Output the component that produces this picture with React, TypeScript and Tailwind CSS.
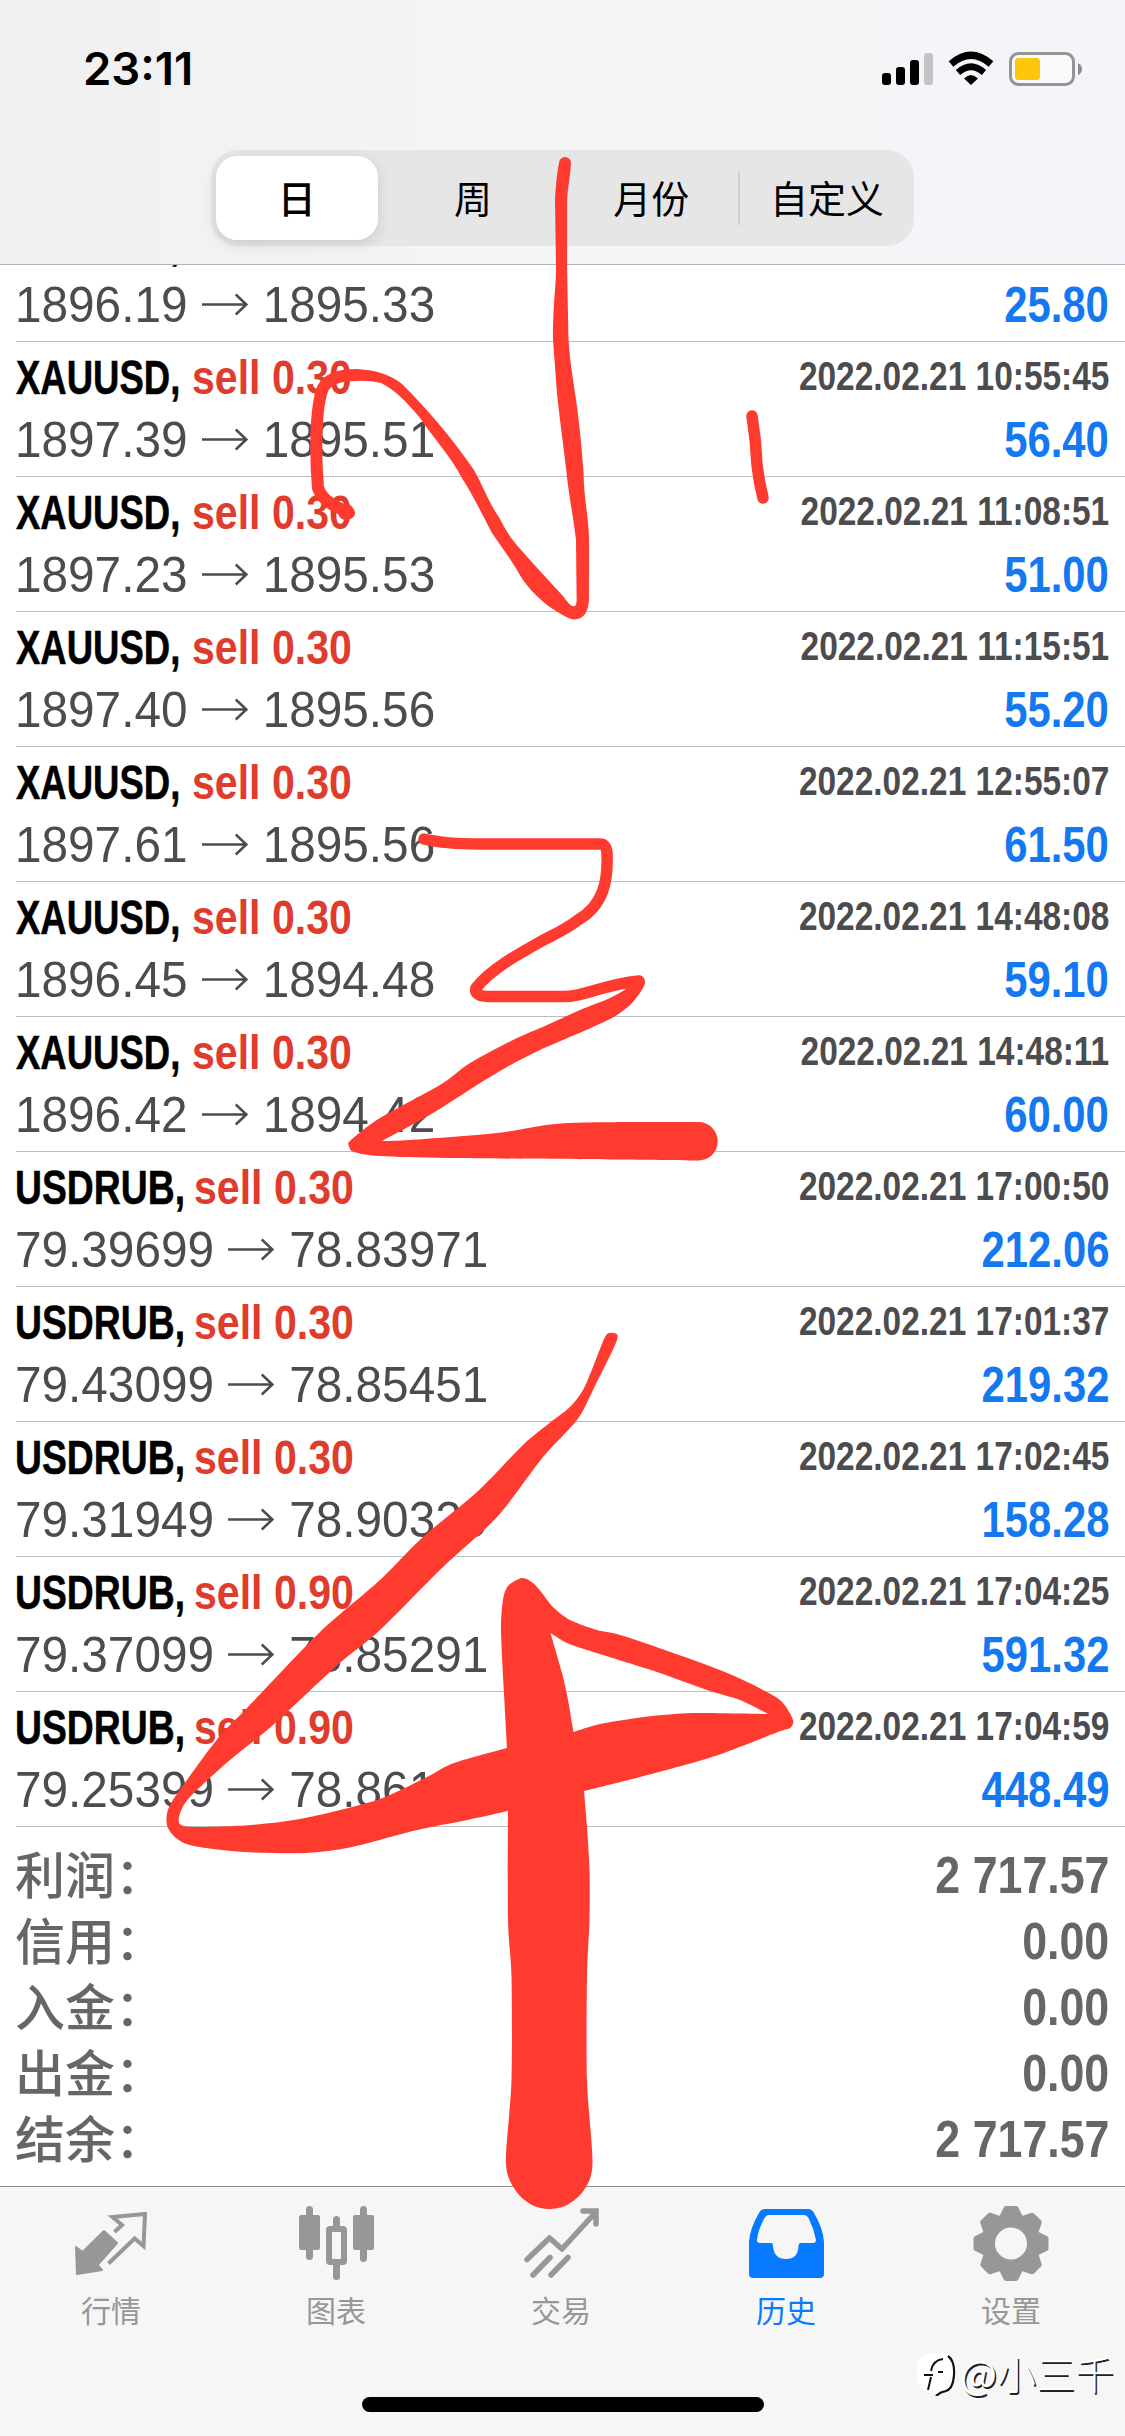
import React from 'react';

type Point = [number, number];

interface Deal {
  symbol: string;
  volume: string;
  open: string;
  close: string;
  time: string;
  profit: string;
}

const deals: Deal[] = [
  { symbol: 'XAUUSD', volume: '0.30', open: '1896.19', close: '1895.33', time: '2022.02.21 10:42:18', profit: '25.80' },
  { symbol: 'XAUUSD', volume: '0.30', open: '1897.39', close: '1895.51', time: '2022.02.21 10:55:45', profit: '56.40' },
  { symbol: 'XAUUSD', volume: '0.30', open: '1897.23', close: '1895.53', time: '2022.02.21 11:08:51', profit: '51.00' },
  { symbol: 'XAUUSD', volume: '0.30', open: '1897.40', close: '1895.56', time: '2022.02.21 11:15:51', profit: '55.20' },
  { symbol: 'XAUUSD', volume: '0.30', open: '1897.61', close: '1895.56', time: '2022.02.21 12:55:07', profit: '61.50' },
  { symbol: 'XAUUSD', volume: '0.30', open: '1896.45', close: '1894.48', time: '2022.02.21 14:48:08', profit: '59.10' },
  { symbol: 'XAUUSD', volume: '0.30', open: '1896.42', close: '1894.42', time: '2022.02.21 14:48:11', profit: '60.00' },
  { symbol: 'USDRUB', volume: '0.30', open: '79.39699', close: '78.83971', time: '2022.02.21 17:00:50', profit: '212.06' },
  { symbol: 'USDRUB', volume: '0.30', open: '79.43099', close: '78.85451', time: '2022.02.21 17:01:37', profit: '219.32' },
  { symbol: 'USDRUB', volume: '0.30', open: '79.31949', close: '78.90329', time: '2022.02.21 17:02:45', profit: '158.28' },
  { symbol: 'USDRUB', volume: '0.90', open: '79.37099', close: '78.85291', time: '2022.02.21 17:04:25', profit: '591.32' },
  { symbol: 'USDRUB', volume: '0.90', open: '79.25399', close: '78.86169', time: '2022.02.21 17:04:59', profit: '448.49' },
];

const totals = [
  { label: '利润：', value: '2 717.57' },
  { label: '信用：', value: '0.00' },
  { label: '入金：', value: '0.00' },
  { label: '出金：', value: '0.00' },
  { label: '结余：', value: '2 717.57' },
];

/**
 * Closed outline through the points, rounded a little at every point.
 * A point that is given twice stays a sharp corner.
 */
const outline = (pts: Point[]): string => {
  const n = pts.length;
  const k = 7;
  const same = (p: Point, q: Point) => p[0] === q[0] && p[1] === q[1];
  let d = `M${pts[0][0]} ${pts[0][1]}`;
  for (let i = 0; i < n; i++) {
    const a = pts[(i - 1 + n) % n];
    const b = pts[i];
    const c = pts[(i + 1) % n];
    const e = pts[(i + 2) % n];
    if (same(b, c)) continue;
    const c1 = same(a, b) ? b : [b[0] + (c[0] - a[0]) / k, b[1] + (c[1] - a[1]) / k];
    const c2 = same(c, e) ? c : [c[0] - (e[0] - b[0]) / k, c[1] - (e[1] - b[1]) / k];
    d += `C${c1[0]} ${c1[1]} ${c2[0]} ${c2[1]} ${c[0]} ${c[1]}`;
  }
  return d + 'Z';
};

const fourOuter: Point[] = [
  [605, 1337], [593, 1367], [583, 1390], [570, 1407], [547, 1425], [523, 1445], [477, 1492], [423, 1537],
  [380, 1580], [320, 1632], [248, 1707], [219, 1737], [187, 1780], [169, 1807], [167, 1825], [176, 1838],
  [194, 1846], [244, 1852], [305, 1853], [352, 1847], [413, 1831], [467, 1820], [508, 1811], [508, 1811],
  [508, 1920], [511.5, 1977], [511.5, 2080], [506, 2163], [516, 2191], [532, 2205], [549, 2209], [567, 2205],
  [584, 2190], [592.5, 2163], [587, 2080], [587, 1977], [589.5, 1920], [589.5, 1870], [587, 1827], [584, 1791],
  [584, 1791], [640, 1777], [712, 1757], [778, 1732], [790, 1728], [793, 1720], [783, 1703], [767, 1692],
  [720, 1670], [627, 1637], [597, 1630], [570, 1620], [553, 1607], [542, 1593], [533, 1583], [522, 1578],
  [508, 1586], [503, 1600], [501, 1630], [504, 1693], [507, 1748], [507, 1748], [454, 1763], [427, 1777],
  [377, 1800], [305, 1818], [251, 1825], [201, 1827], [181, 1825], [179.5, 1815], [190, 1797], [230, 1760],
  [273, 1725], [337.5, 1665], [380, 1630], [443, 1567], [497, 1517], [543, 1457], [577, 1420], [593, 1390],
  [617, 1340], [612, 1333],
];

const fourInner: Point[] = [
  [550.5, 1633], [550.5, 1633], [562, 1673], [568, 1700], [573.5, 1732], [573.5, 1732], [600, 1724], [637, 1718],
  [663, 1715], [697, 1713], [768, 1714], [768, 1714], [740, 1700], [707, 1690], [657, 1672], [587, 1650],
  [567, 1643],
];

const threeTail: Point[] = [
  [627, 988], [610, 998], [580, 1010], [547, 1025], [513, 1040], [470, 1063], [440, 1085], [380, 1118],
  [351, 1140], [349, 1146], [354, 1152], [380, 1156], [450, 1158], [610, 1159.5], [698, 1160.5], [698, 1160.5],
  [698, 1122], [698, 1122], [567, 1123], [497, 1133], [410, 1140], [382, 1141], [382, 1141], [433, 1113],
  [477, 1085], [507, 1067], [540, 1050], [593, 1027], [617, 1015], [633, 1002], [645, 983], [636, 976],
];

/**
 * Status bar
 */
const StatusBar: React.FC = () => (
  <div className="flex h-[138px] items-center justify-between pl-[83px] pr-[42px]">
    <span className="font-['Inter'] text-[45.5px] leading-none font-semibold text-black">23:11</span>
    <svg className="h-9 w-[202px]" viewBox="881 51 202 36">
      <rect x="882" y="73" width="9" height="12" rx="3" />
      <rect x="896" y="67" width="9" height="18" rx="3" />
      <rect x="910" y="60" width="9" height="25" rx="3" />
      <rect x="924" y="53" width="9" height="32" rx="3" fill="#c4c4c4" />
      <path d="M951 64Q971 46.500 991 64" fill="none" stroke="#000" strokeWidth="7" />
      <path d="M958 72.500Q971 61 984 72.500" fill="none" stroke="#000" strokeWidth="6.5" />
      <path d="M964 78.5Q971 71.500 978 78.500L971 85Z" />
      <rect x="1010.500" y="53.500" width="63" height="31" rx="8" fill="#f8f9fb" stroke="#949494" strokeWidth="3" />
      <rect x="1015" y="58" width="25" height="22" rx="3.500" fill="#fdc70b" />
      <path d="M1078 63Q1082 65 1082 69Q1082 73 1078 75Z" fill="#8c8c8c" />
    </svg>
  </div>
);

/**
 * Period selector
 */
const PeriodTabs: React.FC = () => (
  <div className="mx-auto mt-3 grid h-24 w-[703px] grid-cols-4 rounded-[27px] bg-[#e6e6e7] font-['Noto_Sans_CJK_SC',sans-serif] text-[38px] leading-none text-black">
    <div className="my-1.5 ml-[5px] mr-[9px] flex items-center justify-center rounded-[21px] bg-white pb-[3px] font-medium shadow-[0_4px_14px_rgba(0,0,0,0.12)]">
      日
    </div>
    <div className="flex items-center justify-center pb-[3px] pr-[3px]">周</div>
    <div className="flex items-center justify-center pb-[3px] pl-0.5">月份</div>
    <div className="flex items-center">
      <div className="h-[54px] w-0.5 bg-[#cfcfd1]" />
      <div className="flex-1 pb-[3px] text-center">自定义</div>
    </div>
  </div>
);

const DealRow: React.FC<{ deal: Deal }> = ({ deal }) => (
  <div className="ml-4 h-[135px] border-b border-[#bdbdbf] pr-4 pt-2.5 whitespace-nowrap">
    <div className="flex h-[50px] items-start justify-between">
      <div className="flex text-[49px] leading-[50px] font-bold">
        <div className="w-[176px]">
          <span
            className={
              deal.symbol === 'XAUUSD'
                ? 'inline-block origin-left scale-x-[0.745] text-black [-webkit-text-stroke:0.5px_#000]'
                : 'inline-block origin-left -translate-x-px scale-x-[0.762] text-black [-webkit-text-stroke:0.5px_#000]'
            }
          >
            {deal.symbol},
          </span>
        </div>
        <span
          className={
            deal.symbol === 'XAUUSD'
              ? 'inline-block origin-left scale-x-[0.838] text-[#e03c2d]'
              : 'inline-block origin-left translate-x-0.5 scale-x-[0.838] text-[#e03c2d]'
          }
        >
          sell {deal.volume}
        </span>
      </div>
      <span className="inline-block origin-right scale-x-[0.836] text-[40px] leading-[49px] font-bold text-[#4c4c4e]">
        {deal.time}
      </span>
    </div>
    <div className="mt-[13px] flex h-[50px] items-center justify-between text-[49.5px] leading-[50px]">
      <div className="-ml-px flex origin-left scale-x-[0.964] items-center gap-[15px] text-[#4c4c4e]">
        <span>{deal.open}</span>
        <svg className="h-6 w-[48px]" viewBox="0 0 48 24" fill="none" stroke="currentColor" strokeWidth="2.6">
          <path d="M0 11.500H46M35 1.500L46 11.500L35 21.500" />
        </svg>
        <span>{deal.close}</span>
      </div>
      <span className="origin-right scale-x-[0.845] font-bold text-[#1478f0]">{deal.profit}</span>
    </div>
  </div>
);

/**
 * Bottom tab icons
 */
const QuotesIcon: React.FC = () => (
  <svg className="h-[84px] w-20" viewBox="71 2200 80 84">
    <path
      d="M76 2247L82.600 2252L104 2231L117 2243L97.500 2265L102 2270L77 2274Z"
      fill="currentColor"
      stroke="currentColor"
      strokeWidth="2"
      strokeLinejoin="round"
    />
    <path
      d="M114.500 2232L122 2225L112.500 2217L145 2214L143.500 2246L134.600 2238.500L108.500 2263.500"
      fill="none"
      stroke="currentColor"
      strokeWidth="4"
    />
  </svg>
);

const ChartIcon: React.FC = () => (
  <svg className="h-[84px] w-20" viewBox="296 2200 80 84" fill="currentColor">
    <rect x="299" y="2215" width="21" height="35" rx="2" />
    <rect x="306" y="2206" width="7" height="54" rx="3.500" />
    <rect x="353" y="2215" width="21" height="35" rx="2" />
    <rect x="360" y="2206" width="7" height="56" rx="3.500" />
    <rect x="329" y="2229" width="15" height="33" rx="1" fill="none" stroke="currentColor" strokeWidth="6" />
    <rect x="333" y="2216" width="7" height="15" rx="3.500" />
    <rect x="333" y="2262" width="7" height="18" rx="3.500" />
  </svg>
);

const TradeIcon: React.FC = () => (
  <svg className="h-[84px] w-20" viewBox="521 2200 80 84" fill="none" stroke="currentColor" strokeWidth="5.500" strokeLinecap="round">
    <path d="M527 2259.500L549.500 2238L562 2249L595 2213" strokeLinejoin="round" />
    <path d="M583 2211H596V2224" />
    <path d="M533 2275L550 2257.500M551 2275L568 2257.500" />
  </svg>
);

const HistoryIcon: React.FC = () => (
  <svg className="h-[84px] w-20" viewBox="746 2200 80 84" fill="currentColor">
    <path
      fillRule="evenodd"
      d="M765 2209H808Q812 2209 814 2213Q823 2228 824 2242V2274Q824 2278 820 2278H753Q749 2278 749 2274V2242Q750 2228 759 2213Q761 2209 765 2209ZM769 2215Q766 2215 764 2219Q758 2230 757 2240Q757 2243 760 2243H771Q773 2243 773 2246Q774 2259 786 2259Q798 2259 798.500 2246Q798.500 2243 801 2243H813Q816 2243 816 2240Q814 2229 809 2219Q807 2215 804 2215Z"
    />
  </svg>
);

const SettingsIcon: React.FC = () => (
  <svg className="h-[84px] w-20" viewBox="-40 -43.500 80 84" fill="currentColor" stroke="currentColor" strokeWidth="5" strokeLinejoin="round">
    {[0, 45, 90, 135, 180, 225, 270, 315].map((angle) => (
      <path key={angle} d="M-5 -35H5L9.500 -26H-9.500Z" transform={`rotate(${angle})`} />
    ))}
    <circle r="22.500" fill="none" strokeWidth="13" />
  </svg>
);

const tabs = [
  { label: '行情', Icon: QuotesIcon },
  { label: '图表', Icon: ChartIcon },
  { label: '交易', Icon: TradeIcon },
  { label: '历史', Icon: HistoryIcon, active: true },
  { label: '设置', Icon: SettingsIcon },
];

const TabBar: React.FC = () => (
  <div className="relative h-[250px] shrink-0 border-t border-[#8e8e90] bg-[#f6f6f6]">
    <div className="-ml-[1.5px] grid w-[1125px] grid-cols-5 pt-[13px] font-['Noto_Sans_CJK_SC',sans-serif] text-[30px] leading-none">
      {tabs.map(({ label, Icon, active }) => (
        <div
          key={label}
          className={`flex flex-col items-center gap-2.5 ${active ? 'text-[#087aff]' : 'text-[#979797]'}`}
        >
          <Icon />
          <span>{label}</span>
        </div>
      ))}
    </div>
    <div className="mx-auto mt-[73px] h-[15px] w-[402px] rounded-full bg-black" />

    {/* Author mark over the bar */}
    <div className="absolute right-[11px] top-[161px] flex items-center font-['Noto_Sans_CJK_SC',sans-serif] text-[39px] leading-none text-white [text-shadow:1.5px_1.5px_0.5px_#222]">
      <svg className="h-12 w-11" viewBox="914 2350 44 48" fill="none">
        <rect x="915" y="2355" width="39" height="40" rx="15" fill="#fff" />
        <path d="M922 2377H931M936 2374H941M929 2373Q931 2362 941 2361M929 2379L926 2392" stroke="#111" strokeWidth="2" />
        <path d="M946 2358Q953 2363 952 2377Q951 2391 944 2393Q938 2394 934 2398" stroke="#111" strokeWidth="2.200" />
      </svg>
      <span>@</span>
      <span className="font-light">小三千</span>
    </div>
  </div>
);

/**
 * Red marker drawing on top of everything
 */
const MarkerLayer: React.FC = () => (
  <svg className="pointer-events-none absolute inset-0 h-[2436px] w-[1125px]" viewBox="0 0 1125 2436" fill="#ff3b30">
    <path d="M355 369Q385 370 402 384C425 407 450 435 474 470C485 490 490 505 499 517C510 540 520 548 530 560Q548 580 563 596Q571 608 575 606Q577 604 576.600 597L576 540C573 515 568 490 566.600 473C563 440 557 400 556 380L553 340C553 300 556 290 556 267L555 200C556 180 558 168 559 163A6 6 0 0 1 571 163C570 180 567 190 567 205L567 267L568.500 340C570 365 575 390 577 407C580 430 582 450 583.500 473C584 500 589 520 589 540L589 597Q589 619 574 619.500Q567 619 547 605C535 595 525 585 517 570C508 555 500 545 492 533C480 510 470 490 463 480C450 455 435 440 420 418C405 400 395 390 381 383Q368 380 355 381Z" />
    <path
      d="M349 513L337 507Q322 500 318 488C316 465 314 410 323 388Q330 375 356 375"
      fill="none"
      stroke="#ff3b30"
      strokeWidth="12"
      strokeLinecap="round"
    />
    <circle cx="346" cy="512" r="8" />
    <path d="M752 416Q756 440 757 465Q759 482 763 498" fill="none" stroke="#ff3b30" strokeWidth="11.500" strokeLinecap="round" />
    <path
      d="M424 839Q445 844 480 844H600Q607 844 607 855C608 880 604 905 578 920C565 930 555 934 540 942C515 956 490 970 476 988Q474 996 488 996.500H560C583 998 600 985 639 981"
      fill="none"
      stroke="#ff3b30"
      strokeWidth="11.500"
      strokeLinecap="round"
      strokeLinejoin="round"
    />
    <path d={outline(threeTail)} />
    <circle cx="698.500" cy="1141.300" r="19.200" />
    <path fillRule="evenodd" d={outline(fourOuter) + outline(fourInner)} />
  </svg>
);

const App: React.FC = () => {
  return (
    <div className="relative flex h-[2436px] w-[1125px] flex-col overflow-hidden bg-white font-['Liberation_Sans',Arial,sans-serif]">
      {/* Header */}
      <div className="h-[265px] shrink-0 border-b border-[#b4b4b6] bg-linear-to-r from-[#f1f0f0] via-[#f5f5f5] to-[#f4f5fa]">
        <StatusBar />
        <PeriodTabs />
      </div>

      {/* Deals, scrolled so that the first one is cut by the header */}
      <div className="flex-1 overflow-hidden">
        <div className="-mt-[58px]">
          {deals.map((deal) => (
            <DealRow key={deal.time} deal={deal} />
          ))}
        </div>
        <div className="pl-[15px] pr-4 pt-[15px] text-[#666668]">
          {totals.map((item) => (
            <div key={item.label} className="flex h-[66px] items-center justify-between leading-[66px]">
              <span className="-mt-1.5 font-['Noto_Sans_CJK_SC',sans-serif] text-[50px] leading-[60px] font-medium">
                {item.label}
              </span>
              <span className="origin-right scale-x-[0.86] text-[52px] font-bold">{item.value}</span>
            </div>
          ))}
        </div>
      </div>

      <TabBar />
      <MarkerLayer />
    </div>
  );
};

export default App;
